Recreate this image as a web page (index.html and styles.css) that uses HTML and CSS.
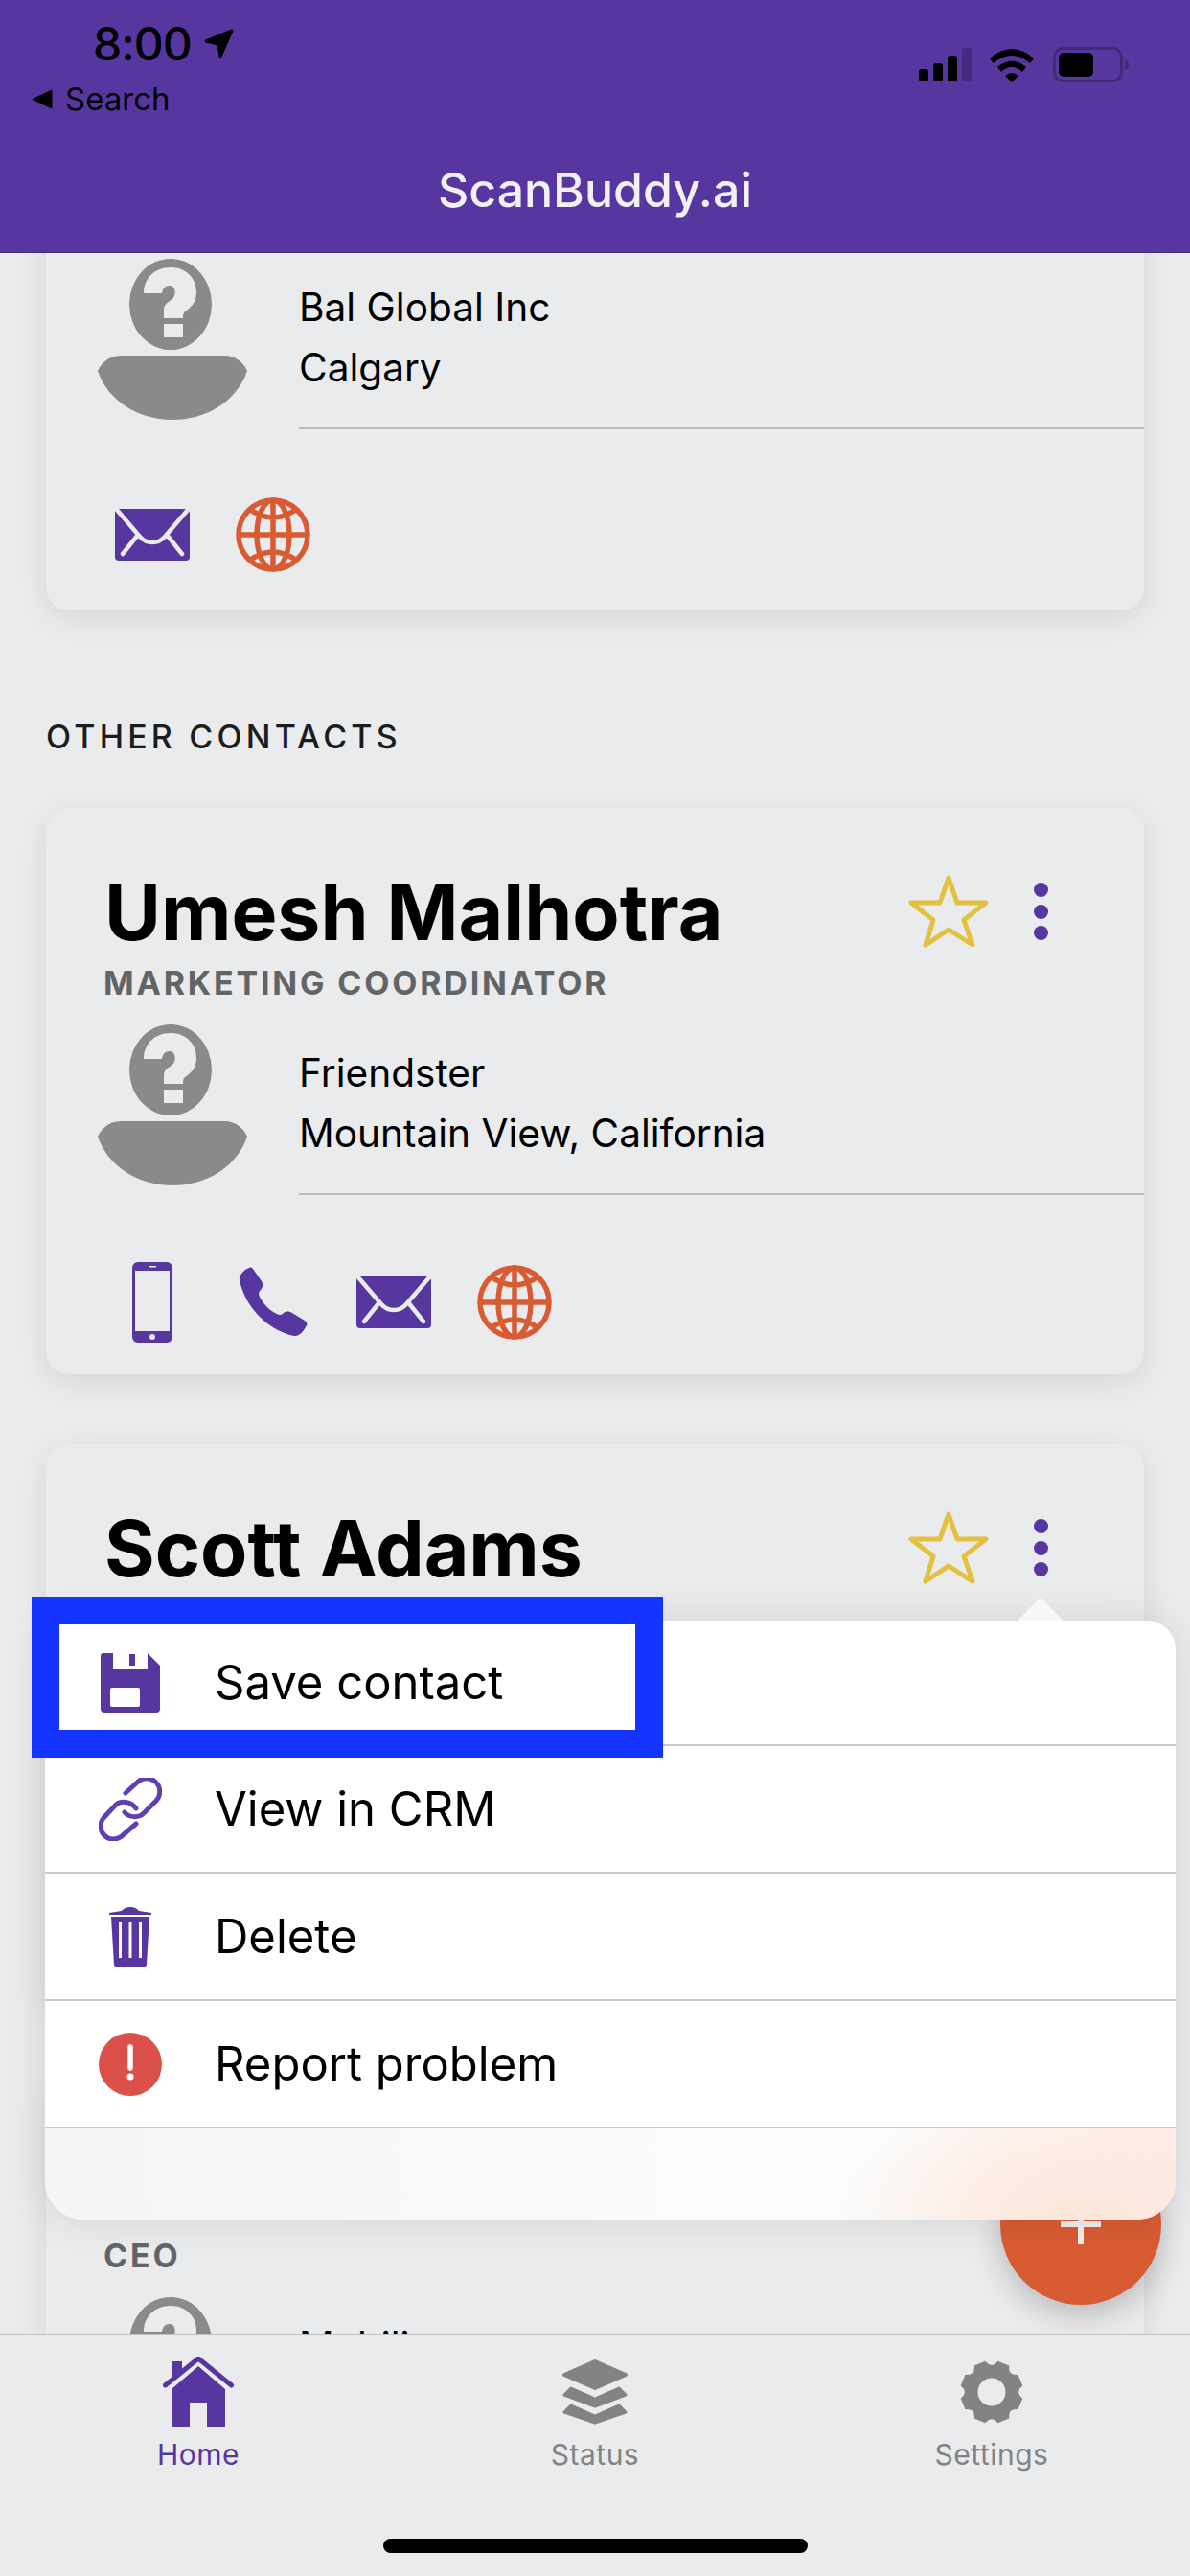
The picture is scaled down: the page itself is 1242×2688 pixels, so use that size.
FILE: index.html
```html
<!DOCTYPE html>
<html lang="en">
<head>
  <meta charset="UTF-8" />
  <meta name="viewport" content="width=device-width, initial-scale=1.0"/>
  <title>ScanBuddy.ai</title>
  <link rel="stylesheet" href="styles.css">
</head>
<body>

  <!-- shared icons -->
  <svg class="icon-defs" aria-hidden="true">
    <symbol id="i-avatar" viewBox="0 0 156 168">
      <ellipse cx="76" cy="47.5" rx="43" ry="47.5" fill="#898a8c"/>
      <path d="M48 36C48 20 60 9 76 9C92 9 103 20 103 35C103 46 97 51 91 55C89 57 89 59 89 62L69 62L69 53C69 47 74 45 78 42C82 39 82 28 75 28C69 28 68 32 67 36Z" fill="#e9ebed"/>
      <rect x="69" y="68" width="20" height="14" fill="#e9ebed"/>
      <path d="M24 101L132 101C145 101 153 110 156 117C146 147 115 168 78 168C41 168 10 147 0 117C3 110 11 101 24 101Z" fill="#898a8c"/>
    </symbol>
    <symbol id="i-star" viewBox="0 0 84 78">
      <path d="M42 4L51 30L81 30L58 48L67 74L42 58L18 74L26 48L3 30L33 30Z" fill="none" stroke="#e3c13e" stroke-width="5" stroke-linejoin="round"/>
    </symbol>
    <symbol id="i-mail" viewBox="0 0 78 54">
      <rect width="78" height="54" rx="4" fill="#5836a0"/>
      <path d="M2 1L26 29C33 37 45 37 52 29L76 1M24 27L8 47M54 27L70 47" fill="none" stroke="#e9ebed" stroke-width="4.5" stroke-linecap="round"/>
    </symbol>
    <symbol id="i-globe" viewBox="0 0 78 78">
      <g fill="none" stroke="#d95b33" stroke-width="5.5">
        <circle cx="39" cy="39" r="36"/>
        <ellipse cx="39" cy="39" rx="17" ry="36"/>
        <path d="M39 3V75M3 39H75M14 12Q39 30 64 12M14 66Q39 48 64 66"/>
      </g>
    </symbol>
    <symbol id="i-mobile" viewBox="0 0 42 84">
      <rect width="42" height="84" rx="6" fill="#5836a0"/>
      <rect x="3" y="9" width="36" height="63" fill="#e9ebed"/>
      <rect x="17" y="4" width="8" height="1.5" fill="#e9ebed"/>
      <circle cx="21" cy="78" r="3" fill="#e9ebed"/>
    </symbol>
    <symbol id="i-call" viewBox="0 0 72 74">
      <path d="M1 14C0 8 6 3 11 1C13 0 14 1 15 2L24 15C26 18 25 22 23 24C20 27 21 30 23 33C27 40 33 46 40 49C43 51 45 50 47 48C49 46 53 46 56 48L69 56C71 58 72 59 71 61C68 67 63 73 58 72C30 66 7 42 1 14Z" fill="#5836a0"/>
    </symbol>
  </svg>

  <header class="app-header">
    <div class="status-bar">
      <div class="status-left">
        <div class="status-time">
          <span>8:00</span>
          <svg width="32" height="32" viewBox="0 0 32 32"><path d="M29 2L2 13L15 16L17 29Z" fill="#000" stroke="#000" stroke-width="3" stroke-linejoin="round"/></svg>
        </div>
        <div class="status-back">
          <svg width="22" height="21" viewBox="0 0 22 21"><path d="M21 1V20L1 10.500Z" fill="#000" stroke="#000" stroke-width="1" stroke-linejoin="round"/></svg>
          <span>Search</span>
        </div>
      </div>
      <svg class="status-icons" width="220" height="38" viewBox="0 0 220 38">
        <rect x="0" y="23" width="10" height="13" rx="3" fill="#000"/>
        <rect x="15" y="17" width="10" height="19" rx="3" fill="#000"/>
        <rect x="30" y="9" width="10" height="27" rx="3" fill="#000"/>
        <rect x="45" y="1" width="10" height="35" rx="3" fill="#432b80"/>
        <path d="M74 12Q97 -8 120 12L116 17Q97 1 78 17ZM82 21Q97 8 112 21L108 26Q97 16 86 26ZM90 30Q97 24 104 30L97 37Z" fill="#000"/>
        <rect x="141.500" y="1.500" width="70" height="34" rx="9" fill="none" stroke="#3f2a78" stroke-width="3"/>
        <rect x="146" y="6" width="36" height="25" rx="5" fill="#000"/>
        <path d="M215 13C218 14 219 16 219 18.500C219 21 218 23 215 24Z" fill="#3f2a78"/>
      </svg>
    </div>
    <h1 class="app-title">ScanBuddy.ai</h1>
  </header>

  <main class="content">
    <div class="contact-list">

      <section class="card card-first">
        <div class="card-top">
          <h2 class="card-name">&nbsp;</h2>
        </div>
        <div class="card-role">&nbsp;</div>
        <div class="card-body">
          <svg class="avatar"><use href="#i-avatar"/></svg>
          <div class="card-info">
            <div>Bal Global Inc</div>
            <div>Calgary</div>
          </div>
        </div>
        <div class="card-actions">
          <span class="action"><svg width="78" height="54"><use href="#i-mail"/></svg></span>
          <span class="action"><svg width="78" height="78"><use href="#i-globe"/></svg></span>
        </div>
      </section>

      <h3 class="section-label">OTHER CONTACTS</h3>

      <section class="card">
        <div class="card-top">
          <h2 class="card-name">Umesh Malhotra</h2>
          <div class="card-tools">
            <svg width="84" height="78"><use href="#i-star"/></svg>
            <div class="more-dots"><i></i><i></i><i></i></div>
          </div>
        </div>
        <div class="card-role">MARKETING COORDINATOR</div>
        <div class="card-body">
          <svg class="avatar"><use href="#i-avatar"/></svg>
          <div class="card-info">
            <div>Friendster</div>
            <div>Mountain View, California</div>
          </div>
        </div>
        <div class="card-actions">
          <span class="action"><svg width="42" height="84"><use href="#i-mobile"/></svg></span>
          <span class="action"><svg width="72" height="74"><use href="#i-call"/></svg></span>
          <span class="action"><svg width="78" height="54"><use href="#i-mail"/></svg></span>
          <span class="action"><svg width="78" height="78"><use href="#i-globe"/></svg></span>
        </div>
      </section>

      <!-- the rest of this card is covered by the menu -->
      <section class="card card-covered">
        <div class="card-top">
          <h2 class="card-name">Scott Adams</h2>
          <div class="card-tools">
            <svg width="84" height="78"><use href="#i-star"/></svg>
            <div class="more-dots"><i></i><i></i><i></i></div>
          </div>
        </div>
      </section>

      <section class="card">
        <div class="card-top">
          <h2 class="card-name">&nbsp;</h2>
          <div class="card-tools">
            <svg width="84" height="78"><use href="#i-star"/></svg>
            <div class="more-dots"><i></i><i></i><i></i></div>
          </div>
        </div>
        <div class="card-role">CEO</div>
        <div class="card-body">
          <svg class="avatar"><use href="#i-avatar"/></svg>
          <div class="card-info">
            <div>Mobilize</div>
          </div>
        </div>
      </section>

    </div>
  </main>

  <button class="fab" aria-label="Add"></button>

  <!-- popup menu -->
  <div class="menu">
    <div class="menu-row">
      <svg class="menu-icon" width="66" height="66" viewBox="0 0 66 66">
        <path d="M5 2H51L64 15V60Q64 64 60 64H6Q2 64 2 60V5Q2 2 5 2Z" fill="#5836a0"/>
        <rect x="15" y="1" width="36" height="18" fill="#fff"/>
        <rect x="32" y="3" width="6" height="12" fill="#5836a0"/>
        <rect x="12" y="38" width="31" height="20" rx="2" fill="#fff"/>
      </svg>
      <span>Save contact</span>
    </div>
    <div class="menu-row">
      <svg class="menu-icon" width="66" height="66" viewBox="0 0 66 66">
        <path d="M28 16L40 5A13.500 13.500 0 0 1 60 24L47 37C42 42 32 42 27 36M39 48L24 61A13.500 13.500 0 0 1 5 42L18 28C23 24 33 24 39 32" fill="none" stroke="#5f3fb3" stroke-width="5" stroke-linecap="round"/>
      </svg>
      <span>View in CRM</span>
    </div>
    <div class="menu-row">
      <svg class="menu-icon" width="66" height="66" viewBox="0 0 66 66">
        <path d="M11 8L24 6Q27 2 33 2Q39 2 42 6L55 8V10H11Z" fill="#5836a0"/>
        <path d="M13 12H53L50 62Q50 64 48 64H18Q16 64 16 62Z" fill="#5836a0"/>
        <rect x="21" y="18" width="3" height="37" fill="#fff"/>
        <rect x="31.500" y="18" width="3" height="37" fill="#fff"/>
        <rect x="42" y="18" width="3" height="37" fill="#fff"/>
      </svg>
      <span>Delete</span>
    </div>
    <div class="menu-row">
      <svg class="menu-icon" width="66" height="66" viewBox="0 0 66 66">
        <circle cx="33" cy="33" r="33" fill="#db504a"/>
        <path d="M33 15V37" stroke="#fff" stroke-width="5.500" stroke-linecap="round"/>
        <circle cx="33" cy="46" r="3.500" fill="#fff"/>
      </svg>
      <span>Report problem</span>
    </div>
    <div class="menu-frost"></div>
  </div>

  <!-- highlight drawn over the first menu row -->
  <div class="highlight-box"></div>

  <nav class="tab-bar">
    <div class="tab tab-active">
      <svg width="74" height="74" viewBox="0 0 74 74">
        <path d="M9 5H20V13L9 22ZM37 10L65 34V73H46V48H28V73H9V34Z" fill="#5836a0"/>
        <path d="M2.500 30L37 2L71.500 30" fill="none" stroke="#5836a0" stroke-width="5" stroke-linecap="round" stroke-linejoin="round"/>
      </svg>
      <span>Home</span>
    </div>
    <div class="tab">
      <svg width="68" height="68" viewBox="0 0 68 68">
        <g fill="#828385" stroke="#828385" stroke-width="4" stroke-linejoin="round">
          <path d="M34 2L66 16L34 30L2 16Z"/>
          <path d="M9 30L34 41L59 30L66 37L34 49L2 37Z" stroke-width="3"/>
          <path d="M9 48L34 59L59 48L66 55L34 66L2 55Z" stroke-width="3"/>
        </g>
      </svg>
      <span>Status</span>
    </div>
    <div class="tab">
      <svg width="68" height="68" viewBox="0 0 68 68">
        <path d="M40.600 1.700L52.200 6.500Q51 17 61.500 15.800L66.300 27.400Q58 34 66.300 40.600L61.500 52.200Q51 51 52.200 61.500L40.600 66.300Q34 58 27.400 66.300L15.800 61.500Q17 51 6.500 52.200L1.700 40.600Q10 34 1.700 27.400L6.500 15.800Q17 17 15.800 6.500L27.400 1.700Q34 10 40.600 1.700Z" fill="#828385"/>
        <circle cx="34" cy="34" r="14.500" fill="#e9ebed"/>
      </svg>
      <span>Settings</span>
    </div>
    <div class="home-indicator"></div>
  </nav>

</body>
</html>
```

FILE: styles.css
```css
* {
  box-sizing: border-box;
}

body {
  margin: 0;
  width: 1242px;
  height: 2688px;
  position: relative;
  display: flex;
  flex-direction: column;
  overflow: hidden;
  background-color: #e9ebed;
  color: #000;
  font-family: Inter, "Noto Sans", sans-serif;
}

.icon-defs {
  position: absolute;
  width: 0;
  height: 0;
}

/* header */
.app-header {
  position: relative;
  z-index: 2;
  height: 264px;
  padding-top: 22px;
  background-color: #5836a0;
  border-bottom: 1px solid #432b80;
}

.status-bar {
  display: flex;
  justify-content: space-between;
  align-items: flex-start;
  height: 101px;
  padding-right: 63px;
}

.status-time {
  display: flex;
  align-items: center;
  gap: 13px;
  height: 48px;
  padding-left: 97px;
  font-size: 48px;
  font-weight: 500;
  line-height: 48px;
  letter-spacing: -1px;
}

.status-back {
  display: flex;
  align-items: center;
  gap: 13px;
  height: 40px;
  margin-top: 13px;
  padding-left: 33px;
  font-size: 33px;
  line-height: 40px;
}

.status-icons {
  margin-top: 27px;
}

.app-title {
  margin: 45px 0 0;
  text-align: center;
  color: #f0f0f5;
  font-size: 50px;
  font-weight: 500;
  line-height: 60px;
}

/* contact list */
.content {
  flex: 1;
  min-height: 0;
  overflow: hidden;
}

.contact-list {
  margin-top: -220px;
  padding: 0 48px;
}

.card {
  margin-bottom: 73px;
  padding: 59px 0 33px;
  background-color: #e9ebed;
  border-radius: 24px;
  box-shadow: 0 8px 32px rgba(0, 0, 0, 0.09);
}

.card-first {
  margin-bottom: 0;
  padding-bottom: 37px;
}

.card-covered {
  height: 591px;
}

.card-top {
  display: flex;
  justify-content: space-between;
  align-items: flex-start;
  padding: 0 100px 0 61px;
}

.card-name {
  margin: 0;
  font-size: 80.5px;
  font-weight: 700;
  line-height: 100px;
}

.card-tools {
  display: flex;
  align-items: flex-start;
  gap: 47px;
  margin-top: 10px;
}

.more-dots {
  display: flex;
  flex-direction: column;
  gap: 7.5px;
  margin-top: 9px;
}

.more-dots i {
  display: block;
  width: 15px;
  height: 15px;
  border-radius: 50%;
  background-color: #5836a0;
}

.card-role {
  margin-top: 4px;
  padding-left: 60px;
  color: #636466;
  font-size: 34px;
  font-weight: 700;
  line-height: 40px;
  letter-spacing: 2.8px;
}

.card-body {
  display: flex;
  gap: 54px;
  margin-top: 23px;
  padding-left: 54px;
}

.avatar {
  flex: none;
  width: 156px;
  height: 168px;
}

.card-info {
  flex: 1;
  height: 178px;
  padding-top: 19px;
  border-bottom: 2px solid #bcbdc0;
  font-size: 40.6px;
  line-height: 63px;
}

.card-actions {
  display: flex;
  align-items: center;
  height: 84px;
  margin-top: 70px;
  padding-left: 48px;
}

.card-first .card-actions {
  margin-top: 68px;
}

.action {
  display: flex;
  justify-content: center;
  width: 126px;
}

.section-label {
  margin: 112px 0 54px;
  color: #1c1c1e;
  font-size: 34px;
  font-weight: 500;
  line-height: 40px;
  letter-spacing: 4.2px;
}

/* add button */
.fab {
  position: absolute;
  left: 1044px;
  top: 2237px;
  z-index: 1;
  width: 168px;
  height: 168px;
  padding: 0;
  border: none;
  border-radius: 50%;
  background-color: #d95b33;
  box-shadow: 0 10px 32px rgba(0, 0, 0, 0.22);
}

.fab::before,
.fab::after {
  content: "";
  position: absolute;
  background-color: #eeeeee;
}

.fab::before {
  left: 63px;
  top: 81px;
  width: 42px;
  height: 6px;
}

.fab::after {
  left: 81px;
  top: 63px;
  width: 6px;
  height: 42px;
}

/* popup menu */
.menu {
  position: absolute;
  left: 47px;
  top: 1691px;
  z-index: 3;
  display: flex;
  flex-direction: column;
  width: 1180px;
  height: 625px;
  border-radius: 30px 30px 40px 40px;
  background-color: #fff;
  box-shadow: 0 0 44px rgba(0, 0, 0, 0.1);
}

.menu::before {
  content: "";
  position: absolute;
  left: 1015px;
  top: -24px;
  border-left: 24px solid transparent;
  border-right: 24px solid transparent;
  border-bottom: 24px solid #f6f7f8;
}

.menu-row {
  display: flex;
  align-items: center;
  gap: 55px;
  height: 133px;
  padding-left: 56px;
  border-bottom: 2px solid #c8c9ce;
  font-size: 49px;
}

.menu-row:first-child {
  height: 131px;
  padding-bottom: 0;
}

.menu-icon {
  flex: none;
}

.menu-frost {
  flex: 1;
  border-radius: 0 0 40px 40px;
  background:
    radial-gradient(ellipse 260px 150px at 1085px 100%, #fde6da 0%, rgba(253, 233, 223, 0.75) 45%, rgba(251, 251, 252, 0) 100%),
    linear-gradient(90deg, #f4f5f6 0%, #fafbfc 60%, #fbfbfb 78%, #fceee7 100%);
}

.highlight-box {
  position: absolute;
  left: 33px;
  top: 1666px;
  z-index: 4;
  width: 659px;
  height: 168px;
  border: 29px solid #1534ff;
}

/* tab bar */
.tab-bar {
  position: relative;
  z-index: 2;
  display: grid;
  grid-template-columns: repeat(3, 1fr);
  height: 253px;
  padding-top: 22px;
  background-color: #e9ebed;
  border-top: 2px solid #bfc0c3;
  color: #828385;
  font-size: 30px;
}

.tab {
  display: flex;
  flex-direction: column;
  align-items: center;
  height: 120px;
}

.tab svg {
  flex: none;
  height: 74px;
}

.tab span {
  margin-top: 8px;
  line-height: 40px;
  letter-spacing: 0.5px;
}

.tab-active {
  color: #5836a0;
}

.home-indicator {
  position: absolute;
  left: 400px;
  top: 212px;
  width: 443px;
  height: 15px;
  border-radius: 8px;
  background-color: #000;
}
```
